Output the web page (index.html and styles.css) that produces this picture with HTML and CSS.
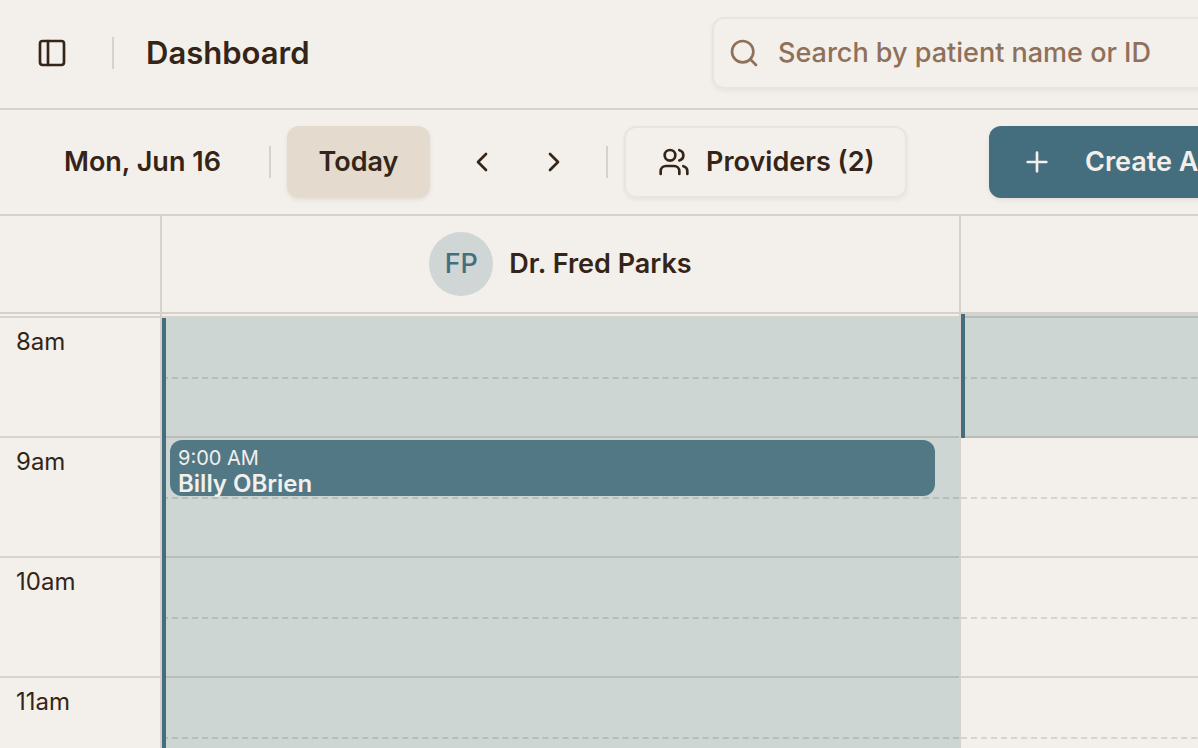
FILE: index.html
```html
<!DOCTYPE html>
<html lang="en">
<head>
<meta charset="utf-8">
<title>Dashboard</title>
<link rel="stylesheet" href="styles.css">
</head>
<body>
<header class="topbar">
  <div class="topbar-start">
    <button class="icon-button" type="button" aria-label="Toggle sidebar">
      <svg class="icon" viewBox="0 0 24 24"><rect x="3" y="3" width="18" height="18" rx="2"/><path d="M9 3v18"/></svg>
    </button>
    <span class="separator"></span>
    <h1 class="title">Dashboard</h1>
  </div>
  <label class="search">
    <svg class="icon" viewBox="0 0 24 24"><circle cx="11" cy="11" r="8"/><path d="m21 21-4.3-4.3"/></svg>
    <input class="search-input" type="search" placeholder="Search by patient name or ID" aria-label="Search patients">
  </label>
</header>

<div class="toolbar">
  <span class="date">Mon, Jun 16</span>
  <span class="separator"></span>
  <button class="button button-today" type="button">Today</button>
  <div class="pager">
    <button class="icon-button" type="button" aria-label="Previous day"><svg class="icon" viewBox="0 0 24 24"><path d="m15 18-6-6 6-6"/></svg></button>
    <button class="icon-button" type="button" aria-label="Next day"><svg class="icon" viewBox="0 0 24 24"><path d="m9 18 6-6-6-6"/></svg></button>
  </div>
  <span class="separator"></span>
  <button class="button button-outline" type="button">
    <svg class="icon" viewBox="0 0 24 24"><path d="M16 21v-2a4 4 0 0 0-4-4H6a4 4 0 0 0-4 4v2"/><circle cx="9" cy="7" r="4"/><path d="M22 21v-2a4 4 0 0 0-3-3.87"/><path d="M16 3.13a4 4 0 0 1 0 7.75"/></svg>
    Providers (2)
  </button>
  <button class="button button-primary" type="button">
    <svg class="icon" viewBox="0 0 24 24"><path d="M5 12h14M12 5v14"/></svg>
    Create Appointment
  </button>
</div>

<main class="calendar">
  <div class="heads">
    <div class="head"></div>
    <div class="head"><span class="avatar">FP</span><span class="provider">Dr. Fred Parks</span></div>
    <div class="head"></div>
  </div>
  <div class="grid">
    <div class="column">
      <div class="sliver"></div>
      <div class="hour">8am</div>
      <div class="hour">9am</div>
      <div class="hour">10am</div>
      <div class="hour">11am</div>
    </div>
    <div class="column">
      <div class="sliver"></div>
      <div class="slot open"></div>
      <div class="slot open">
        <article class="event"><span class="event-time">9:00 AM</span><span class="event-name">Billy OBrien</span></article>
      </div>
      <div class="slot open"></div>
      <div class="slot open"></div>
    </div>
    <div class="column">
      <div class="sliver open"></div>
      <div class="slot open"></div>
      <div class="slot"></div>
      <div class="slot"></div>
      <div class="slot"></div>
    </div>
  </div>
</main>
</body>
</html>
```
FILE: styles.css
```css
:root {
  --bg: #f3efea;
  --ink: #352418;
  --muted: #8f705a;
  --teal: #446e7e;
  --open: #ced6d4;
  --line: rgba(50, 40, 30, 0.14);
  --line-soft: #e9e4df;
}

* { box-sizing: border-box; }

body {
  margin: 0;
  height: 100vh;
  display: flex;
  flex-direction: column;
  overflow: hidden;
  background: var(--bg);
  color: var(--ink);
  font: 500 27px/36px Inter, "Liberation Sans", sans-serif;
}

button, input { font: inherit; color: inherit; }

.icon {
  width: 32px;
  height: 32px;
  flex: none;
  fill: none;
  stroke: currentColor;
  stroke-width: 2;
  stroke-linecap: round;
  stroke-linejoin: round;
}

.separator {
  flex: none;
  width: 2px;
  height: 32px;
  background: #d6d2cb;
}

.icon-button {
  display: grid;
  place-items: center;
  width: 72px;
  height: 72px;
  padding: 0;
  border: 0;
  background: none;
}

.topbar {
  flex: none;
  display: grid;
  grid-template-columns: minmax(696px, 1fr) 520px;
  align-items: center;
  padding: 17px 16px 19px;
  border-bottom: 2px solid #d6d2cb;
}

.topbar-start { display: flex; align-items: center; gap: 24px; }

.title { margin: 0 0 0 8px; font-size: 31px; line-height: 40px; font-weight: 600; }

.search {
  display: flex;
  align-items: center;
  gap: 18px;
  height: 72px;
  padding: 0 14px;
  border: 2px solid var(--line-soft);
  border-radius: 12px;
  box-shadow: 0 2px 4px rgba(50, 40, 30, 0.06);
  color: var(--muted);
}

.search-input {
  flex: 1;
  min-width: 0;
  padding: 0;
  border: 0;
  outline: 0;
  background: none;
}

.search-input::placeholder { color: var(--muted); opacity: 1; }

.toolbar {
  flex: none;
  display: flex;
  align-items: center;
  gap: 16px;
  padding: 16px 16px 16px 64px;
  border-bottom: 2px solid #d6d2cb;
  white-space: nowrap;
}

.date { flex: none; width: 189px; }

.pager { display: flex; flex: none; }

.button {
  flex: none;
  display: flex;
  align-items: center;
  justify-content: center;
  height: 72px;
  padding: 0 32px;
  border: 0;
  border-radius: 12px;
  background: none;
  box-shadow: 0 2px 4px rgba(50, 40, 30, 0.08);
}

.date, .button, .provider { font-weight: 600; }

.button-today { width: 143px; background: #e4dacd; }

.button-outline {
  justify-content: flex-start;
  gap: 16px;
  width: 283px;
  border: 2px solid var(--line-soft);
  box-shadow: 0 2px 4px rgba(50, 40, 30, 0.06);
}

.button-primary {
  gap: 32px;
  margin-left: 66px;
  background: var(--teal);
  color: var(--bg);
}

.calendar { flex: 1; min-height: 0; overflow: hidden; }

.heads, .grid {
  display: grid;
  grid-template-columns: 162px minmax(799px, 1fr) minmax(799px, 1fr);
}

.head {
  display: flex;
  align-items: center;
  justify-content: center;
  gap: 16px;
  height: 98px;
  border-right: 2px solid #d6d2cb;
  border-bottom: 2px solid #d6d2cb;
}

.avatar {
  display: grid;
  place-items: center;
  width: 64px;
  height: 64px;
  border-radius: 50%;
  background: #cfd6d5;
  color: var(--teal);
}

.column { border-right: 2px solid #d6d2cb; }

.sliver { position: relative; height: 4px; border-bottom: 2px solid var(--line); }

.hour {
  height: 120px;
  padding: 6px 16px;
  border-bottom: 2px solid var(--line);
  font-size: 24px;
  font-weight: 400;
}

.slot {
  position: relative;
  height: 120px;
  border-bottom: 2px solid var(--line);
}

.slot::before {
  content: "";
  display: block;
  height: 59px;
  border-bottom: 2px dashed var(--line);
}

.open { background: var(--open); }

/* Availability bar along the left edge of open time */
.open::after {
  content: "";
  position: absolute;
  inset: 0 auto -2px 0;
  width: 4px;
  background: var(--teal);
}

.event {
  position: absolute;
  z-index: 1;
  inset: 2px 24px auto 8px;
  height: 56px;
  padding: 6px 8px;
  border-radius: 12px;
  background: #527886;
  color: var(--bg);
}

.event-time, .event-name { display: block; }
.event-time { font-size: 20px; line-height: 24px; font-weight: 400; }
.event-name { font-size: 24px; line-height: 28px; font-weight: 600; }
```
